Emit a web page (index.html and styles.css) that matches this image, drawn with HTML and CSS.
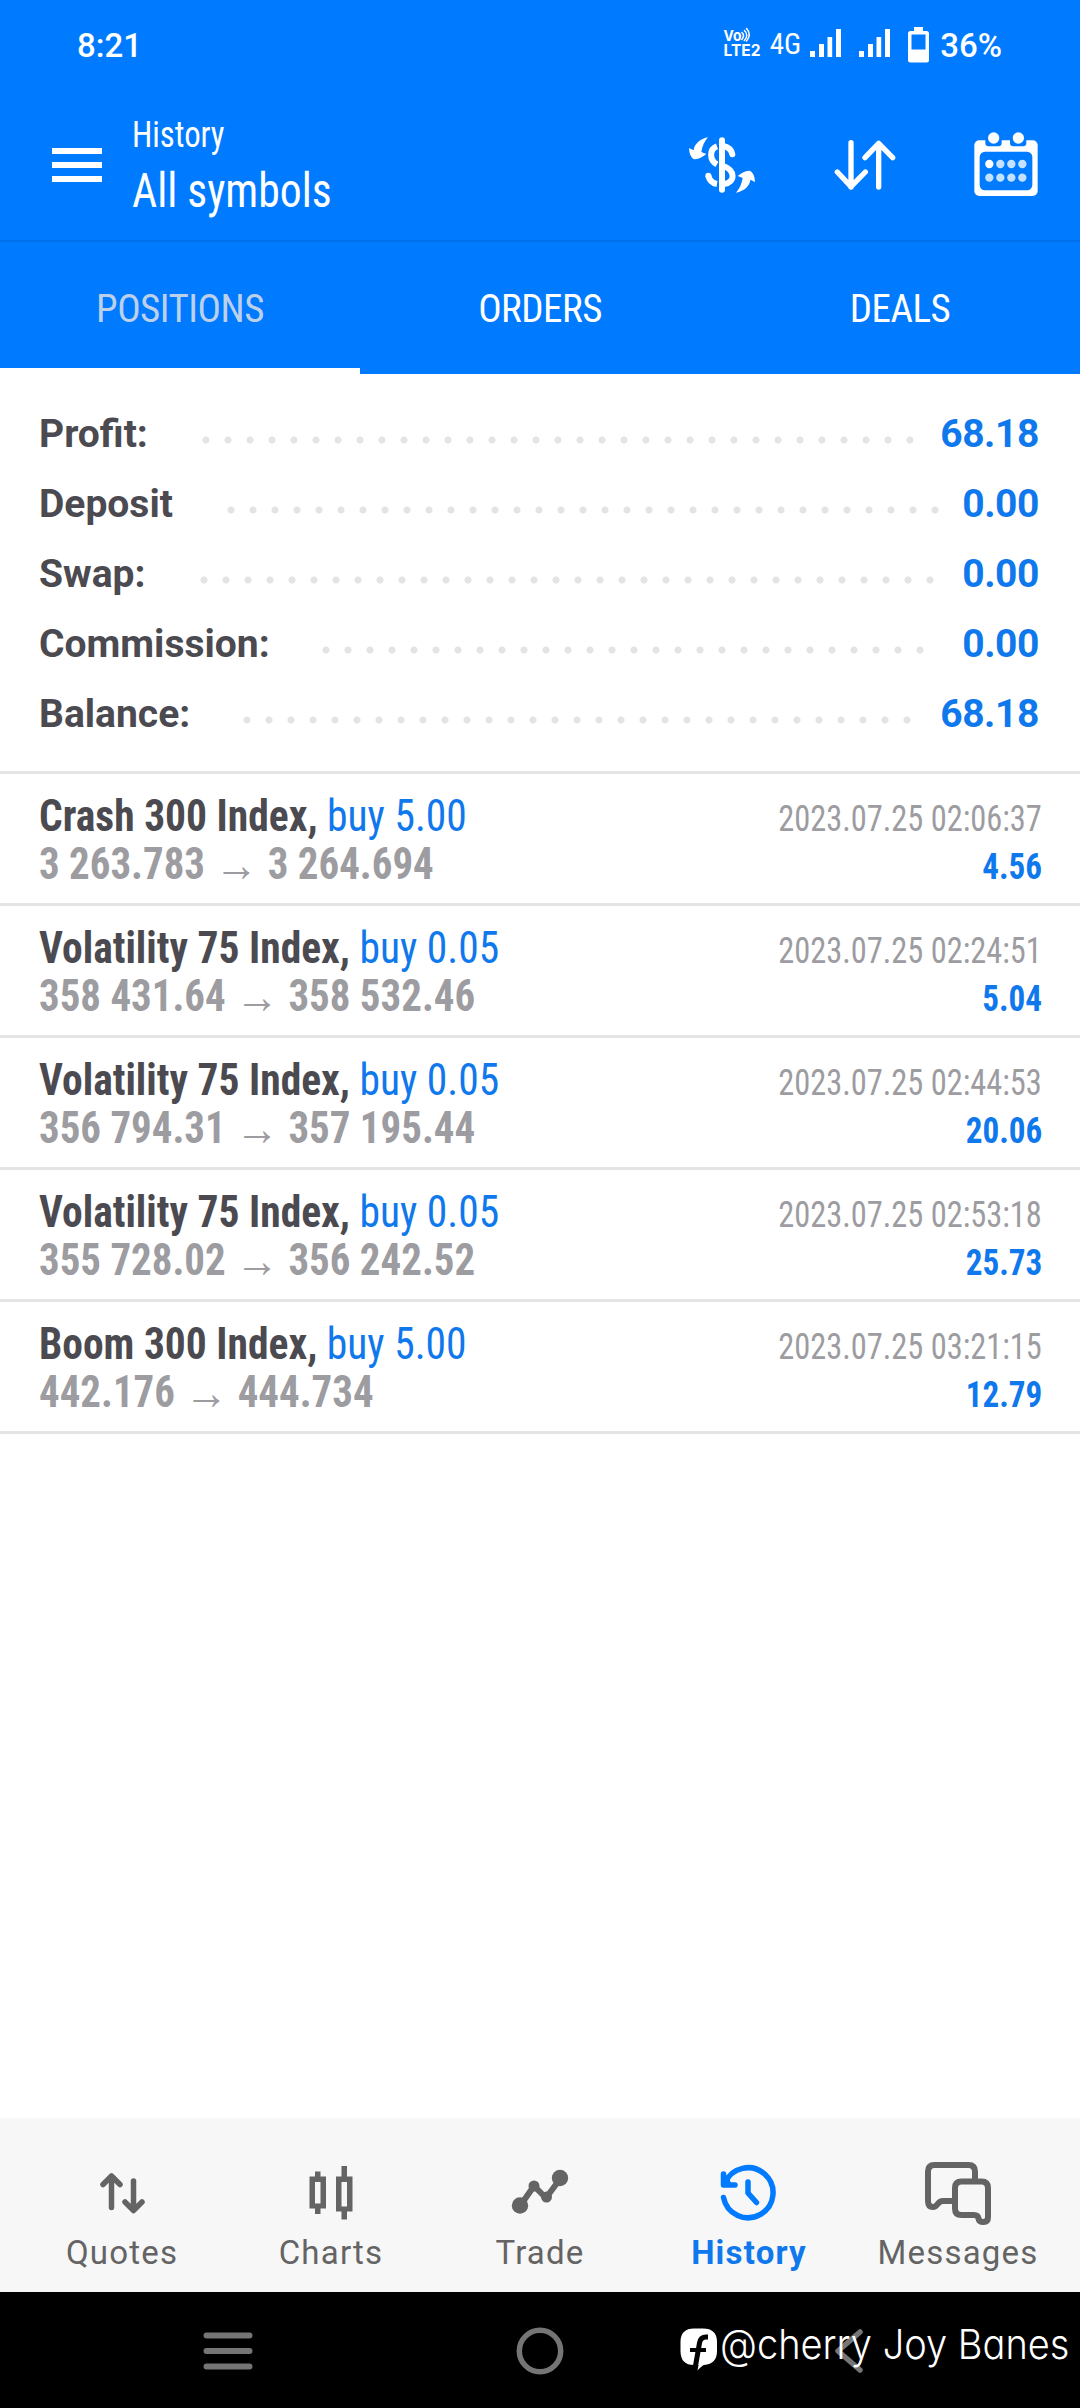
FILE: index.html
```html
<!DOCTYPE html>
<html lang="en">
<head>
<meta charset="utf-8">
<title>History</title>
<link rel="stylesheet" href="styles.css">
</head>
<body>
<div class="phone">
  <div class="status">
    <span class="clock">8:21</span>
    <svg class="volte" width="38" height="32" viewBox="0 0 38 32"><g fill="#fff" font-family="Inter, sans-serif" font-weight="700"><text x="0.5" y="14" font-size="15" textLength="18" lengthAdjust="spacingAndGlyphs">Vo</text><text x="0.5" y="29" font-size="15.5" textLength="37" lengthAdjust="spacingAndGlyphs">LTE2</text></g><path d="M18.5 5q4 3.500 0 8M21 3q5.500 5 0 11M23.200 1q6 6.500 0 13.500" fill="none" stroke="#fff" stroke-width="1.500"/></svg>
    <span class="net">4G</span>
    <svg class="signal" width="31" height="28" viewBox="0 0 31 28"><path d="M0 22h5v6H0zM9 15h5v13H9zM17.500 8h4.700v20h-4.700zM26 0h5v28h-5z"/></svg>
    <svg class="signal two" width="31" height="28" viewBox="0 0 31 28"><path d="M0 22h5v6H0zM9 15h5v13H9zM17.500 8h4.700v20h-4.700zM26 0h5v28h-5z"/></svg>
    <svg class="battery" width="21" height="36" viewBox="0 0 21 36"><path fill-rule="evenodd" d="M6 0h9v4h3.500q2.500 0 2.500 2.500v26.500q0 2.500-2.500 2.500h-16q-2.500 0-2.500-2.500V6.500Q0 4 2.500 4H6zM3.500 7.500v15h14v-15z"/></svg>
    <span class="percent">36%</span>
  </div>
  <header class="appbar">
    <svg class="menu" width="50" height="34" viewBox="0 0 50 34"><path d="M0 0h50v6H0zM0 14h50v6H0zM0 28h50v6H0z"/></svg>
    <div class="titles">
      <div class="title">History</div>
      <div class="subtitle">All symbols</div>
    </div>
    <svg class="currency" width="68" height="58" viewBox="84 408 204 174"><g fill="none" stroke="#fff" stroke-width="18"><path d="M186 421V569" stroke-linecap="round"/><path d="M171 439C148 447 147 480 171 493M145 527Q149 548 171 552"/><path d="M217 463Q213 443 190 438M190 498C226 510 227 547 192 552" stroke-linecap="round"/></g><g fill="#fff"><circle cx="145" cy="527" r="9"/><path id="swing" d="M144 412C118 418 103 432 101 451L87 444Q88 470 102 478Q120 478 139 462L124 456Q128 430 144 412Z"/><use href="#swing" transform="rotate(180 186 495)"/></g></svg>
    <svg class="sort" width="62" height="52" viewBox="522 417 186 156"><path d="M573 428V561M532 516L573 560L616 516M656 561V430M615 473L656 430L698 473" fill="none" stroke="#fff" stroke-width="16" stroke-linecap="round" stroke-linejoin="round"/></svg>
    <svg class="calendar" width="64" height="64" viewBox="944 395 192 192"><rect x="945" y="420" width="190" height="167" rx="15" fill="#fff"/><path d="M978 418h49v10q0 10-10 10h-29q-10 0-10-10zM1052 418h49v10q0 10-10 10h-29q-10 0-10-10z" fill="#007aff"/><rect x="961" y="454" width="158" height="116" rx="16" fill="#007aff"/><g fill="#fff"><circle cx="1003" cy="413" r="17"/><circle cx="1077" cy="413" r="17"/><circle cx="990" cy="491" r="12.500"/></g><g fill="#c4e2ff"><circle cx="1023" cy="491" r="12.500"/><circle cx="1056" cy="491" r="12.500"/><circle cx="1089" cy="491" r="12.500"/><circle cx="990" cy="532" r="12.500"/><circle cx="1023" cy="532" r="12.500"/><circle cx="1056" cy="532" r="12.500"/><circle cx="1089" cy="532" r="12.500"/></g></svg>
  </header>
  <nav class="tabs">
    <div class="tab active">POSITIONS</div>
    <div class="tab">ORDERS</div>
    <div class="tab">DEALS</div>
  </nav>
  <section class="summary">
    <div class="sum"><span class="label">Profit:</span><span class="dots" style="margin-left:156px;width:726px"></span><span class="value">68.18</span></div>
    <div class="sum"><span class="label">Deposit</span><span class="dots" style="margin-left:181px;width:726px"></span><span class="value">0.00</span></div>
    <div class="sum"><span class="label">Swap:</span><span class="dots" style="margin-left:154px;width:748px"></span><span class="value">0.00</span></div>
    <div class="sum"><span class="label">Commission:</span><span class="dots" style="margin-left:276px;width:616px"></span><span class="value">0.00</span></div>
    <div class="sum"><span class="label">Balance:</span><span class="dots" style="margin-left:197px;width:682px"></span><span class="value">68.18</span></div>
  </section>
  <main class="trades">
    <article class="trade">
      <div class="line"><span class="symbol"><b>Crash 300 Index,</b> buy 5.00</span><time>2023.07.25 02:06:37</time></div>
      <div class="line"><span class="prices">3 263.783<i>→</i>3 264.694</span><span class="gain">4.56</span></div>
    </article>
    <article class="trade">
      <div class="line"><span class="symbol"><b>Volatility 75 Index,</b> buy 0.05</span><time>2023.07.25 02:24:51</time></div>
      <div class="line"><span class="prices">358 431.64<i>→</i>358 532.46</span><span class="gain">5.04</span></div>
    </article>
    <article class="trade">
      <div class="line"><span class="symbol"><b>Volatility 75 Index,</b> buy 0.05</span><time>2023.07.25 02:44:53</time></div>
      <div class="line"><span class="prices">356 794.31<i>→</i>357 195.44</span><span class="gain">20.06</span></div>
    </article>
    <article class="trade">
      <div class="line"><span class="symbol"><b>Volatility 75 Index,</b> buy 0.05</span><time>2023.07.25 02:53:18</time></div>
      <div class="line"><span class="prices">355 728.02<i>→</i>356 242.52</span><span class="gain">25.73</span></div>
    </article>
    <article class="trade">
      <div class="line"><span class="symbol"><b>Boom 300 Index,</b> buy 5.00</span><time>2023.07.25 03:21:15</time></div>
      <div class="line"><span class="prices">442.176<i>→</i>444.734</span><span class="gain">12.79</span></div>
    </article>
  </main>
  <nav class="bottom">
    <div class="item">
      <svg width="66" height="64" viewBox="0 0 66 64"><path d="M22.500 46.500V15M14 23.500L22.500 15L31 23.500M44.500 20V49M36 41L44.500 49.500L53 41" fill="none" stroke="#646464" stroke-width="5.500" stroke-linecap="round" stroke-linejoin="round"/></svg>
      <span>Quotes</span></div>
    <div class="item">
      <svg width="66" height="64" viewBox="0 0 66 64"><path fill="#646464" fill-rule="evenodd" d="M17 10.500h5.500v5h5.500v32h-5.500v5.500h-5.500v-5.500h-5.500v-32h5.500zM17 21v21.500h5.500v-21.500zM43.500 5h5.500v10.500h5.500v35h-5.500v8h-5.500v-8h-5.500v-35h5.500zM43.500 21v24.500h5.500v-24.500z"/></svg>
      <span>Charts</span></div>
    <div class="item">
      <svg width="66" height="64" viewBox="0 0 66 64"><path d="M13 45L27 25L39 37L53 18" fill="none" stroke="#646464" stroke-width="6"/><g fill="#646464"><circle cx="13" cy="44.500" r="8.200"/><circle cx="27" cy="25" r="5.500"/><circle cx="39.500" cy="36" r="5.500"/><circle cx="53" cy="17" r="8.200"/></g></svg>
      <span>Trade</span></div>
    <div class="item current">
      <svg width="66" height="64" viewBox="0 0 66 64"><g fill="none" stroke="#007aff" stroke-width="5.500" stroke-linecap="round" stroke-linejoin="round"><path d="M7.500 36.500A25 25 0 1 0 9 22M7.500 13V24H19M32 21V32L40.500 41.500"/></g><path d="M6 25V21L13 17L15 22Z" fill="#007aff"/></svg>
      <span>History</span></div>
    <div class="item">
      <svg class="chat" width="66" height="64" viewBox="0 0 66 64"><g fill="none" stroke="#646464" stroke-width="6" stroke-linejoin="round"><path d="M50 19V10.500Q50 4 43.500 4H9.500Q3 4 3 10.500V40Q3 46 8 46C13 46 12 40 18 40H29"/><path d="M36.500 20.500H56.500Q63 20.500 63 27V56Q63 61 58.500 61T53.500 57.500Q53 54 49 54H36.500Q30 54 30 47.500V27Q30 20.500 36.500 20.500Z"/></g></svg>
      <span>Messages</span></div>
  </nav>
  <div class="sysnav">
    <svg class="recent" width="50" height="40" viewBox="0 0 50 40"><path d="M3.500 4.500H46.500M3.500 20H46.500M3.500 35.500H46.500" stroke="#757575" stroke-width="6" stroke-linecap="round"/></svg>
    <svg class="home" width="50" height="50" viewBox="0 0 50 50"><circle cx="25" cy="25" r="20.700" fill="none" stroke="#757575" stroke-width="5.500"/></svg>
    <svg class="back" width="32" height="46" viewBox="0 0 32 46"><path d="M26 4L4 23L26 42" fill="none" stroke="#757575" stroke-width="5.500" stroke-linecap="round" stroke-linejoin="round"/></svg>
    <div class="watermark">
      <svg width="38" height="44" viewBox="0 0 38 44"><path d="M14 0.500H23Q37 0.500 37 14V23Q37 36 24 37Q22 37.500 17.500 42.500L18.500 37H14Q0.500 37 0.500 23V14Q0.500 0.500 14 0.500Z" fill="#fff"/><path d="M28 9H26Q20.500 9 19.500 15L15.500 38" fill="none" stroke="#000" stroke-width="5"/><path d="M10 22H26" stroke="#000" stroke-width="4"/></svg>
      <span>@cherry Joy Banes</span>
    </div>
  </div>
</div>
</body>
</html>
```
FILE: styles.css
```css
* { box-sizing: border-box; }
body { margin: 0; background: #fff; font-family: Roboto, sans-serif; }
svg { display: block; flex: none; }
span, time, .tab, .title, .subtitle { white-space: nowrap; }

.phone { width: 1080px; height: 2408px; display: flex; flex-direction: column; overflow: hidden; }

.status { height: 92px; background: #007aff; color: #fff; fill: #fff; display: flex; align-items: center; padding: 0 78px 1px 77px; font-size: 33px; font-weight: 500; }
.clock { margin-right: auto; }
.net { font-family: "Roboto Condensed", Roboto, sans-serif; font-stretch: 75%; font-size: 29px; font-weight: 400; margin: 0 9px 4px 9px; }
.volte { margin-bottom: 5px; }
.signal { margin-bottom: 5px; }
.signal.two { margin-left: 18px; }
.battery { margin: 0 11px 2px 18px; }

.appbar { height: 150px; background: #007aff; border-bottom: 2px solid #0070ea; color: #fff; fill: #fff; display: flex; align-items: flex-start; padding: 0 42px 0 52px; }
.menu { margin-top: 56px; }
.titles { margin: 18px auto 0 30px; font-family: "Roboto Condensed", Roboto, sans-serif; font-stretch: 75%; transform: scaleX(.91); transform-origin: left; }
.title { font-size: 36px; line-height: 50px; }
.subtitle { font-size: 48px; line-height: 62px; }
.currency { margin-top: 44px; }
.sort { margin: 47px 0 0 78px; }
.calendar { margin: 40px 0 0 78px; }

.tabs { height: 132px; background: #007aff; color: #fff; display: grid; grid-template-columns: repeat(3, 1fr); font-family: "Roboto Condensed", Roboto, sans-serif; font-stretch: 75%; font-size: 39px; line-height: 135px; letter-spacing: -0.5px; text-align: center; }
.tab { height: 132px; }
.tab.active { color: #bcd0ea; border-bottom: 6px solid #fff; }

.summary { padding: 25px 41px 22px 39px; border-bottom: 3px solid #e4e4e4; height: 400px; }
.sum { height: 70px; line-height: 70px; display: flex; align-items: center; font-size: 39px; font-weight: 700; }
.label { width: 0; color: #4b4a50; }
.dots { flex: none; margin-top: 12px; height: 8px; background: radial-gradient(circle at 11px 4px, #e4e4e4 3.2px, transparent 3.9px) 0 0 / 22px 8px repeat-x; margin-right: auto; }
.value { color: #0f78ec; letter-spacing: -0.4px; }

.trades { flex: 1; font-family: "Roboto Condensed", Roboto, sans-serif; font-stretch: 75%; }
.trade { height: 132px; padding: 18px 38px 0 39px; border-bottom: 3px solid #e4e4e4; }
.line { display: flex; justify-content: space-between; align-items: baseline; height: 48px; line-height: 48px; }
.symbol, .prices { font-size: 45px; transform: scaleX(.922); transform-origin: left; }
.symbol { color: #0f78ec; }
.symbol b { color: #4b4a50; }
.prices { font-weight: 700; color: #9c9ca1; transform: scaleX(.909); }
.prices i { display: inline-block; font: 400 48px/30px "Liberation Sans", sans-serif; width: 69px; text-align: center; vertical-align: -2px; }
time, .gain { font-size: 36px; transform: scaleX(.9); transform-origin: right; }
time { color: #9c9ca1; }
.gain { font-weight: 700; color: #0f78ec; transform: scaleX(.92); }

.bottom { height: 174px; background: #f7f7f7; display: grid; grid-template-columns: repeat(5, 209px); justify-content: center; font-size: 33px; letter-spacing: 1.2px; color: #646464; }
.item { display: flex; flex-direction: column; align-items: center; padding-top: 43px; }
.item span { line-height: 40px; margin-top: 8px; }
.current { color: #0f78ec; font-weight: 700; }

.sysnav { height: 116px; background: #000; position: relative; display: flex; align-items: center; padding-top: 1px; }
.recent { margin-left: 203px; }
.home { margin-left: 262px; }
.back { margin-left: 269px; }
.watermark { position: absolute; left: 680px; top: 26px; width: 392px; display: flex; align-items: flex-start; color: #fff; }
.watermark svg { margin-top: 10px; }
.watermark span { margin-left: 2px; font-family: Inter, sans-serif; font-feature-settings: "cv11"; font-weight: 300; font-size: 41px; line-height: 52px; transform: scaleX(.927); transform-origin: left; }
```
